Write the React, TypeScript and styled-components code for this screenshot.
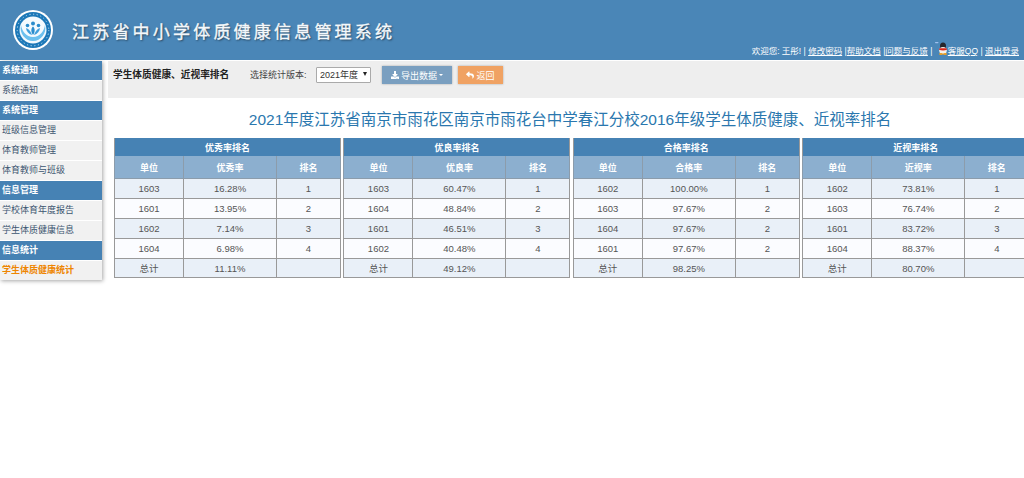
import React from "react";
import styled, { createGlobalStyle } from "styled-components";
import { FaDownload, FaReply } from "react-icons/fa";

const FONT = `"Liberation Sans", "Noto Sans CJK SC", sans-serif`;

const GlobalStyle = createGlobalStyle`
  html, body {
    margin: 0;
    padding: 0;
    height: 100%;
    overflow: hidden;
    background: #fff;
    font-family: ${FONT};
    font-size: 9px;
    color: #333;
  }
`;

const Page = styled.div`
  width: 1024px;
  height: 478px;
  overflow: hidden;
`;

const Header = styled.header`
  position: relative;
  height: 60px;
  margin-bottom: 1px;
  background: #4a86b7;
  display: flex;
  align-items: center;
  padding-left: 13px;
  box-sizing: border-box;
`;

const Title = styled.h1`
  margin: 0 0 0 19px;
  font-size: 17px;
  font-weight: 400;
  -webkit-text-stroke: 0.35px #f4f8fb;
  letter-spacing: 3.2px;
  color: #f4f8fb;
  text-shadow: 1px 1px 2px rgba(0, 0, 0, 0.6);
  white-space: nowrap;
`;

const UserBar = styled.div`
  position: absolute;
  right: 5px;
  bottom: 3px;
  display: flex;
  align-items: flex-end;
  color: #fff;
  font-size: 8.5px;
  line-height: 12px;
  white-space: pre;
`;

const TopLink = styled.a`
  color: #fff;
  text-decoration: underline;
`;

const Body = styled.div`
  display: flex;
  align-items: flex-start;
`;

const Sidebar = styled.nav`
  width: 102px;
  flex: none;
  box-shadow: 1px 1px 4px rgba(0, 0, 0, 0.35);
`;

const SideHead = styled.div`
  height: 19px;
  line-height: 19px;
  padding-left: 2px;
  background: #4682b4;
  border-bottom: 1px solid #fff;
  color: #fff;
  font-weight: 700;
  font-size: 9px;
`;

const SideItem = styled.div<{ $active?: boolean }>`
  height: 19px;
  line-height: 19px;
  padding-left: 2px;
  background: #f1f1f1;
  border-bottom: 1px solid #fff;
  color: ${(p) => (p.$active ? "#ee8500" : "#3c5570")};
  font-weight: ${(p) => (p.$active ? 700 : 400)};
  font-size: 9px;
  &:last-child {
    border-bottom: none;
  }
`;

const Main = styled.main`
  flex: 1;
  min-width: 0;
  margin-left: 6px;
`;

const Toolbar = styled.div`
  height: 37px;
  background: #eee;
  display: flex;
  align-items: flex-start;
  padding: 5px 0 0 5px;
  box-sizing: border-box;
`;

const PageName = styled.div`
  width: 137px;
  flex: none;
  font-size: 9.7px;
  font-weight: 700;
  line-height: 18px;
  color: #222;
`;

const Label = styled.label`
  width: 66px;
  flex: none;
  font-size: 9px;
  line-height: 18px;
  color: #444;
`;

const SelectBox = styled.div`
  position: relative;
  width: 55px;
  height: 16px;
  margin: 1px 11px 0 0;
  flex: none;
  &::after {
    content: "";
    position: absolute;
    right: 4px;
    top: 5px;
    border-left: 2.5px solid transparent;
    border-right: 2.5px solid transparent;
    border-top: 4px solid #222;
    pointer-events: none;
  }
`;

const YearSelect = styled.select`
  appearance: none;
  display: block;
  width: 100%;
  height: 100%;
  margin: 0;
  padding: 0 0 0 3px;
  font-family: ${FONT};
  font-size: 9px;
  color: #333;
  background: #fff;
  border: 1px solid #aaa;
  border-radius: 1px;
`;

const ActionButton = styled.button<{ $color: string; $width: number }>`
  width: ${(p) => p.$width}px;
  height: 18px;
  margin-right: 6px;
  padding: 0;
  flex: none;
  display: flex;
  align-items: center;
  justify-content: center;
  gap: 2px;
  border: none;
  background: ${(p) => p.$color};
  box-shadow: 0 0 2px rgba(0, 0, 0, 0.3);
  color: #fff;
  font-family: ${FONT};
  font-size: 9px;
`;

const Caret = styled.span`
  width: 0;
  height: 0;
  border-left: 2.5px solid transparent;
  border-right: 2.5px solid transparent;
  border-top: 2.5px solid #fff;
`;

const Heading = styled.h2`
  margin: 11px 0 0;
  height: 29px;
  line-height: 22px;
  text-align: center;
  width: 924px;
  font-size: 15.5px;
  font-weight: 400;
  color: #2a77ae;
  white-space: nowrap;
`;

const Tables = styled.div`
  display: flex;
  gap: 2.4px;
  margin-left: 6px;
  width: 920px;
`;

const RankTable = styled.table`
  width: 226px;
  flex: none;
  table-layout: fixed;
  border-collapse: collapse;
  font-size: 9.5px;
  text-align: center;
  border: 1px solid #999;
  border-top: none;
`;

const TitleCell = styled.th`
  height: 18px;
  padding: 0;
  background: #4682b4;
  color: #fff;
  font-size: 9px;
  font-weight: 700;
`;

const HeadCell = styled.th`
  height: 22px;
  padding: 0;
  background: #8cafcf;
  color: #fff;
  font-size: 9px;
  font-weight: 700;
  border: 1px solid #8c9cab;
  border-top: none;
`;

const Row = styled.tr<{ $odd: boolean }>`
  background: ${(p) => (p.$odd ? "#e9f0f8" : "#fbfcff")};
`;

const Cell = styled.td`
  height: 19px;
  padding: 0;
  color: #555;
  border: 1px solid #999;
  tr:last-child > & {
    height: 18px;
  }
`;

const Col = styled.col<{ $w: number }>`
  width: ${(p) => p.$w}px;
`;

function Logo() {
  return (
    <svg width="40" height="40" viewBox="0 0 40 40">
      <circle cx="20" cy="20" r="20" fill="#fff" />
      <circle cx="20" cy="20" r="18" fill="#1c78b8" />
      <circle cx="20" cy="20" r="13.500" fill="#f4fafe" />
      <path d="M8 15c-2 8 4 16 12 16s14-8 12-16c-1 6-5 12-12 12S9 21 8 15z" fill="#6cc0ee" />
      <circle cx="20" cy="13.500" r="2" fill="#2a8ccc" />
      <circle cx="14.500" cy="15.500" r="1.800" fill="#2a8ccc" />
      <circle cx="25.500" cy="15.500" r="1.800" fill="#2a8ccc" />
      <path d="M20 16.500c-2.200 2-2.200 5.500 0 8.500 2.200-3 2.200-6.500 0-8.500z" fill="#2a8ccc" />
      <path d="M13 18c.2 3.300 2.500 6 6 7-1-3-2.800-6-6-7z" fill="#3f9fdc" />
      <path d="M27 18c-.2 3.300-2.500 6-6 7 1-3 2.800-6 6-7z" fill="#3f9fdc" />
      <circle cx="20" cy="20" r="15.800" fill="none" stroke="#fff" strokeWidth="0.7" strokeDasharray="1.200 2.500" />
    </svg>
  );
}

function QQIcon() {
  return (
    <svg width="13" height="15" viewBox="0 0 13 15" style={{ marginBottom: 1 }}>
      <rect x="0" y="1" width="3.500" height="1.200" rx="0.600" fill="#9fc0ee" />
      <ellipse cx="8" cy="5" rx="3" ry="3.500" fill="#26262c" />
      <ellipse cx="8" cy="9.500" rx="3.800" ry="3.500" fill="#f4f1ea" />
      <path d="M4.500 7.200h7l.5 1.500c-2.500 1-5.500 1-8 0z" fill="#d8261c" />
      <ellipse cx="6" cy="13" rx="2" ry="1" fill="#f0a020" />
      <ellipse cx="10" cy="13" rx="2" ry="1" fill="#f0a020" />
    </svg>
  );
}

const groups = [
  { head: "系统通知", items: ["系统通知"] },
  { head: "系统管理", items: ["班级信息管理", "体育教师管理", "体育教师与班级"] },
  { head: "信息管理", items: ["学校体育年度报告", "学生体质健康信息"] },
  { head: "信息统计", items: ["学生体质健康统计"] },
];

const tables = [
  {
    title: "优秀率排名",
    col: "优秀率",
    rows: [["1603", "16.28%", "1"], ["1601", "13.95%", "2"], ["1602", "7.14%", "3"], ["1604", "6.98%", "4"]],
    total: "11.11%",
  },
  {
    title: "优良率排名",
    col: "优良率",
    rows: [["1603", "60.47%", "1"], ["1604", "48.84%", "2"], ["1601", "46.51%", "3"], ["1602", "40.48%", "4"]],
    total: "49.12%",
  },
  {
    title: "合格率排名",
    col: "合格率",
    rows: [["1602", "100.00%", "1"], ["1603", "97.67%", "2"], ["1604", "97.67%", "2"], ["1601", "97.67%", "2"]],
    total: "98.25%",
  },
  {
    title: "近视率排名",
    col: "近视率",
    rows: [["1602", "73.81%", "1"], ["1603", "76.74%", "2"], ["1601", "83.72%", "3"], ["1604", "88.37%", "4"]],
    total: "80.70%",
  },
];

export default function App() {
  return (
    <Page>
      <GlobalStyle />
      <Header>
        <Logo />
        <Title>江苏省中小学体质健康信息管理系统</Title>
        <UserBar>
          欢迎您: 王彤! | <TopLink>修改密码</TopLink> |<TopLink>帮助文档</TopLink> |<TopLink>问题与反馈</TopLink> |{" "}
          <QQIcon />
          <TopLink>客服QQ</TopLink> | <TopLink>退出登录</TopLink>
        </UserBar>
      </Header>
      <Body>
        <Sidebar>
          {groups.map((g) => (
            <React.Fragment key={g.head}>
              <SideHead>{g.head}</SideHead>
              {g.items.map((item) => (
                <SideItem key={item} $active={item === "学生体质健康统计"}>
                  {item}
                </SideItem>
              ))}
            </React.Fragment>
          ))}
        </Sidebar>
        <Main>
          <Toolbar>
            <PageName>学生体质健康、近视率排名</PageName>
            <Label>选择统计版本:</Label>
            <SelectBox>
              <YearSelect defaultValue="2021">
                <option value="2021">2021年度</option>
              </YearSelect>
            </SelectBox>
            <ActionButton $color="#7a9fc0" $width={70}>
              <FaDownload size={8} />
              <span>导出数据</span>
              <Caret />
            </ActionButton>
            <ActionButton $color="#f0a263" $width={45}>
              <FaReply size={8} />
              <span>返回</span>
            </ActionButton>
          </Toolbar>
          <Heading>2021年度江苏省南京市雨花区南京市雨花台中学春江分校2016年级学生体质健康、近视率排名</Heading>
          <Tables>
            {tables.map((t) => (
              <RankTable key={t.title}>
                <colgroup>
                  <Col $w={69} />
                  <Col $w={93} />
                  <Col $w={64} />
                </colgroup>
                <thead>
                  <tr>
                    <TitleCell colSpan={3}>{t.title}</TitleCell>
                  </tr>
                  <tr>
                    <HeadCell>单位</HeadCell>
                    <HeadCell>{t.col}</HeadCell>
                    <HeadCell>排名</HeadCell>
                  </tr>
                </thead>
                <tbody>
                  {t.rows.map((r, i) => (
                    <Row key={r[0]} $odd={i % 2 === 0}>
                      <Cell>{r[0]}</Cell>
                      <Cell>{r[1]}</Cell>
                      <Cell>{r[2]}</Cell>
                    </Row>
                  ))}
                  <Row $odd>
                    <Cell>总计</Cell>
                    <Cell>{t.total}</Cell>
                    <Cell />
                  </Row>
                </tbody>
              </RankTable>
            ))}
          </Tables>
        </Main>
      </Body>
    </Page>
  );
}
